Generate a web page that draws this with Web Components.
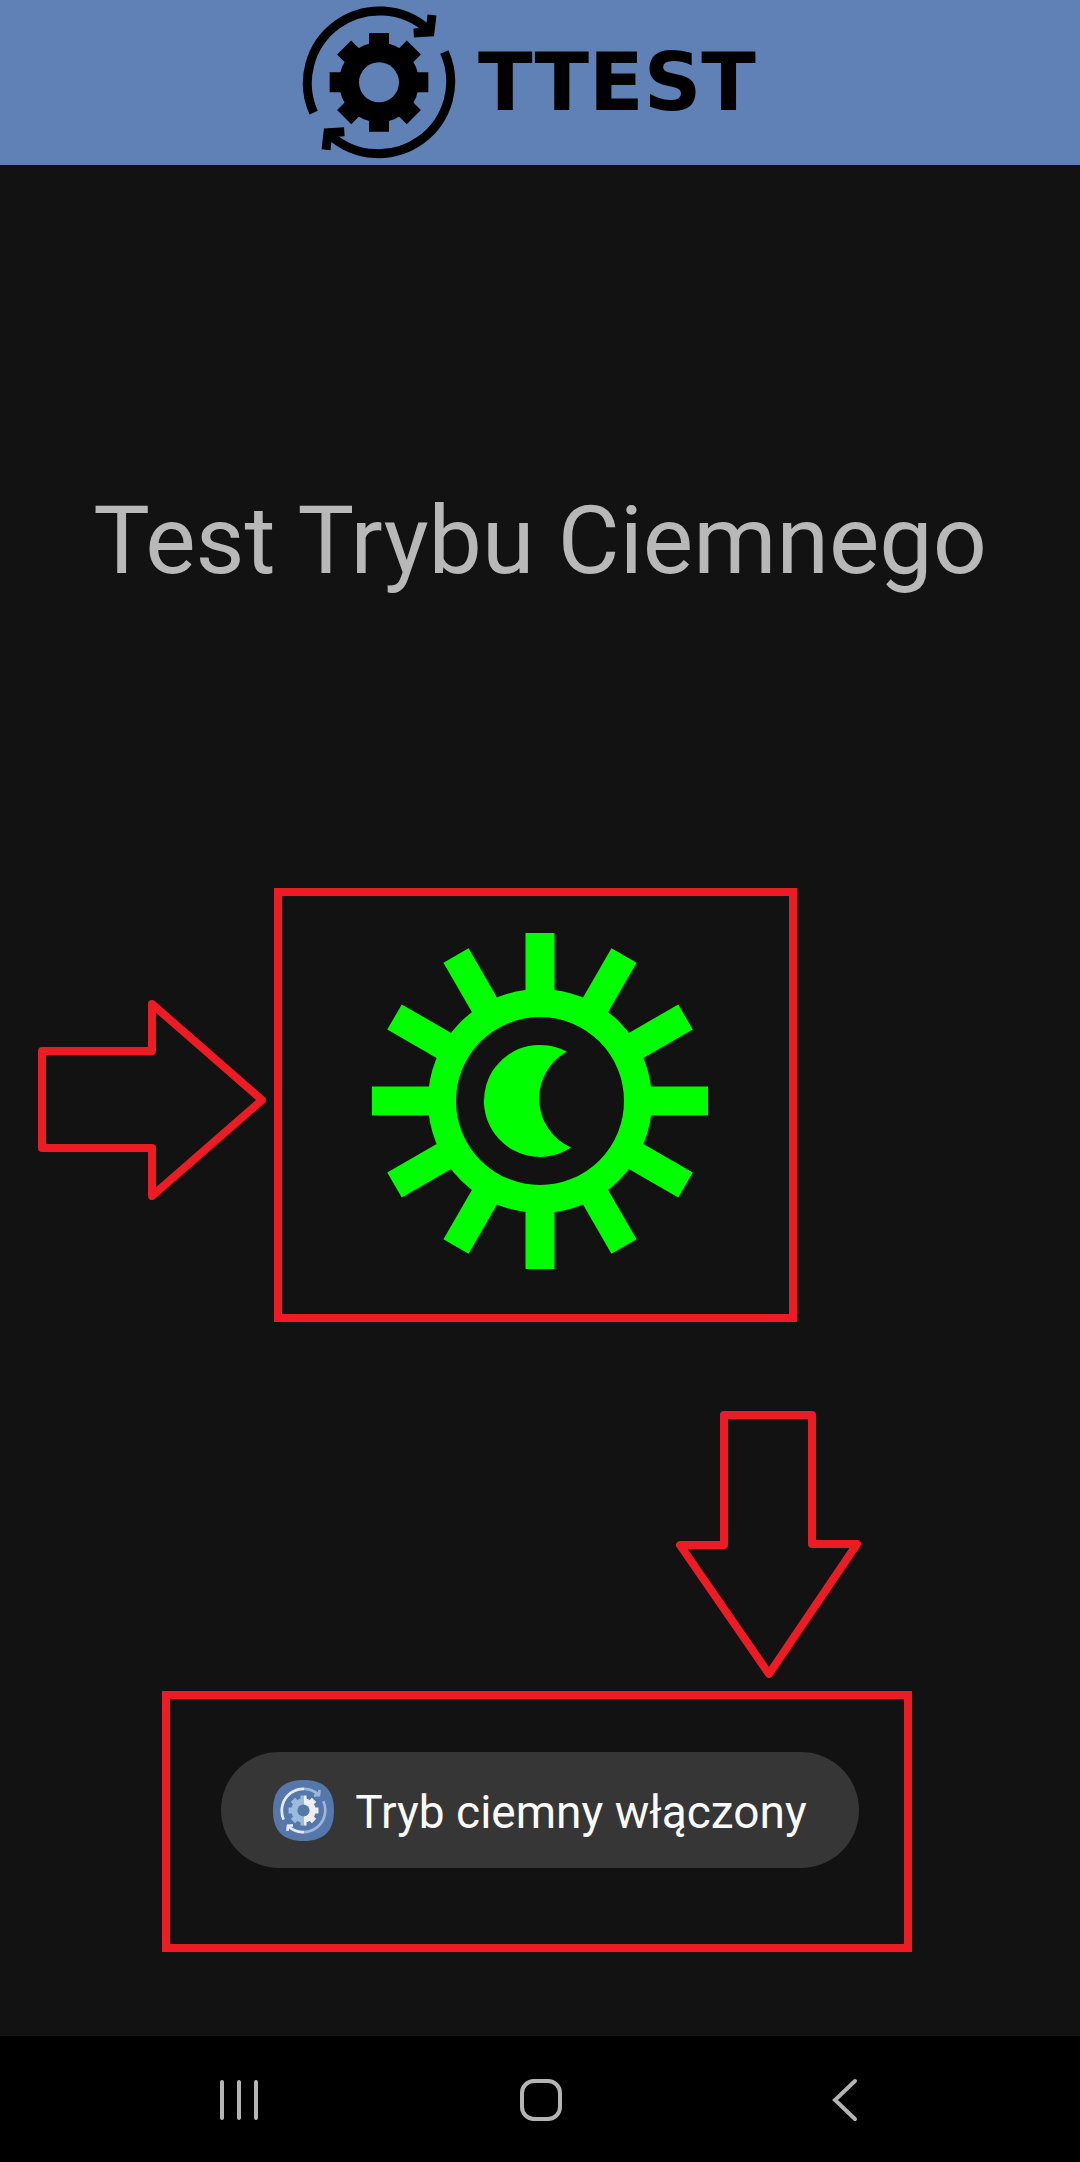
<!DOCTYPE html>
<html lang="pl">
<head>
<meta charset="utf-8">
<meta name="viewport" content="width=device-width, initial-scale=1">
<title>Test Trybu Ciemnego</title>
<style>
  body { margin: 0; background: #121212; color: #b8b8b8; font-family: Roboto, "Noto Sans", sans-serif; }
</style>
</head>
<body>
<dark-mode-app></dark-mode-app>
<script>
  const define = (name, markup, setup) => {
    const template = document.createElement('template');
    template.innerHTML = markup;
    customElements.define(name, class extends HTMLElement {
      constructor() {
        super();
        this.attachShadow({ mode: 'open' }).append(template.content.cloneNode(true));
      }
      connectedCallback() { if (setup) setup(this, this.shadowRoot); }
    });
  };

  // Cog inside two chasing arrows; left and right halves are coloured by custom properties.
  define('gear-mark', `
    <style>
      :host { display: block; width: 154px; height: 155px; --a: #000; --b: #000; --c: #000; --d: #000; }
      svg { display: block; width: 100%; height: 100%; }
      .ring-l { stop-color: var(--a); } .ring-r { stop-color: var(--b); }
      .cog-l { stop-color: var(--c); } .cog-r { stop-color: var(--d); }
    </style>
    <svg viewBox="35 14 462 465" aria-hidden="true">
      <defs>
        <linearGradient id="ring" gradientUnits="userSpaceOnUse" x1="36" x2="496" y1="0" y2="0">
          <stop class="ring-l" offset=".5"/><stop class="ring-r" offset=".5"/>
        </linearGradient>
        <linearGradient id="cog" gradientUnits="userSpaceOnUse" x1="36" x2="496" y1="0" y2="0">
          <stop class="cog-l" offset=".5"/><stop class="cog-r" offset=".5"/>
        </linearGradient>
        <mask id="cogmask" maskUnits="userSpaceOnUse" x="100" y="80" width="340" height="340">
          <g fill="#fff" stroke="#fff" stroke-width="60">
            <circle cx="266" cy="246" r="120" stroke="none"/>
            <path d="M266 98V394M118 246H414M161.500 141.500L370.500 350.500M370.500 141.500L161.500 350.500"/>
          </g>
          <circle cx="266" cy="246" r="60" fill="#000"/>
        </mask>
      </defs>
      <g fill="none" stroke="url(#ring)" stroke-width="27">
        <path d="M70 337A216.500 216.500 0 0 1 413 88"/>
        <path d="M425 44L419 95L370 98"/>
        <path d="M462 155A216.500 216.500 0 0 1 119 404"/>
        <path d="M107 448L113 397L162 394"/>
      </g>
      <rect x="100" y="80" width="340" height="340" fill="url(#cog)" mask="url(#cogmask)"/>
    </svg>`);

  define('brand-bar', `
    <style>
      :host { display: flex; justify-content: center; align-items: center; height: 165px; background: #6081b6; color: #000; }
      .word { width: 323px; text-align: center; font: bold 80px/100px "DejaVu Sans", sans-serif; }
    </style>
    <gear-mark></gear-mark>
    <span class="word"><slot></slot></span>`);

  define('mode-toggle', `
    <style>
      :host { display: block; }
      button { display: block; padding: 0; border: 0; background: none; color: #0f0; cursor: pointer; }
      svg { display: block; width: 336px; height: 336px; }
    </style>
    <button type="button" aria-label="Tryb ciemny" aria-pressed="true">
      <svg viewBox="-168 -168 336 336" aria-hidden="true">
        <circle r="98" fill="none" stroke="currentColor" stroke-width="28"/>
        <g id="rays" stroke="currentColor" stroke-width="29"></g>
        <path fill="currentColor" d="M26.700 -49.300A56 56 0 1 0 31 46.500A53.600 53.600 0 0 1 26.700 -49.300Z"/>
      </svg>
    </button>`, (host, root) => {
      const rays = root.getElementById('rays');
      if (rays.childElementCount) return;
      for (let angle = 0; angle < 360; angle += 30) {
        const ray = document.createElementNS('http://www.w3.org/2000/svg', 'path');
        ray.setAttribute('d', 'M0 -106V-168');
        ray.setAttribute('transform', `rotate(${angle})`);
        rays.append(ray);
      }
    });

  define('callout-frame', `
    <style>:host { display: block; box-sizing: border-box; border: 8px solid #ed1c24; }</style>
    <slot></slot>`);

  define('callout-arrow', `
    <style>
      :host { display: block; }
      svg { display: none; fill: none; stroke: #ed1c24; stroke-width: 8; stroke-linejoin: round; }
      :host([direction="right"]) .right, :host([direction="down"]) .down { display: block; }
    </style>
    <svg class="right" width="228" height="200" viewBox="0 0 228 200" aria-hidden="true">
      <path d="M4 51H114V4L224 100L114 196V148H4Z"/>
    </svg>
    <svg class="down" width="185" height="267" viewBox="0 0 185 267" aria-hidden="true">
      <path d="M48 4H136V133H181L93 263L4 134H48Z"/>
    </svg>`);

  define('toast-message', `
    <style>
      :host { display: flex; align-items: center; justify-content: center; gap: 21px; box-sizing: border-box;
        width: 638px; height: 116px; border-radius: 58px; background: #363636; color: #fafafa;
        font-size: 46px; line-height: 54px; white-space: nowrap; }
      .app { display: grid; place-items: center; flex: none; width: 61px; height: 61px; }
      .app > * { grid-area: 1 / 1; }
      .app svg { width: 61px; height: 61px; }
      gear-mark { width: 47px; height: 47px; --a: #e3eaf4; --b: #9bb8dc; --c: #9bbbdd; --d: #eceef0; }
      p { margin: 0; padding-top: 4px; }
    </style>
    <span class="app">
      <svg viewBox="0 0 61 61" aria-hidden="true">
        <path fill="#5677a9" d="M30.500 0C51 0 61 10 61 30.500S51 61 30.500 61S0 51 0 30.500S10 0 30.500 0Z"/>
      </svg>
      <gear-mark></gear-mark>
    </span>
    <p><slot></slot></p>`);

  define('system-nav', `
    <style>
      :host { display: block; background: #000; }
      nav { display: grid; grid-template-columns: repeat(3, 1fr); padding: 2px 85px 0 88px; }
      button { display: grid; place-items: center; height: 124px; padding: 0; border: 0; background: none; color: #b4b4b4; cursor: pointer; }
      svg { display: block; width: 44px; height: 44px; fill: none; stroke: currentColor; stroke-width: 4; stroke-linecap: round; }
    </style>
    <nav aria-label="Nawigacja">
      <button type="button" aria-label="Ostatnie"><svg viewBox="0 0 44 44"><path d="M5 4V40M22 4V40M39 4V40"/></svg></button>
      <button type="button" aria-label="Ekran główny"><svg viewBox="0 0 44 44"><rect x="3" y="3" width="38" height="38" rx="12"/></svg></button>
      <button type="button" aria-label="Wstecz"><svg viewBox="0 0 44 44"><path d="M33 3L13 22L33 41"/></svg></button>
    </nav>`);

  define('dark-mode-app', `
    <style>
      :host { display: flex; flex-direction: column; min-height: 100vh; }
      main { flex: 1; display: flex; flex-direction: column; padding: 320px 0 84px; }
      h1 { margin: 0 0 291px; text-align: center; font-size: 95px; line-height: 112px; font-weight: 400; }
      .toggle { display: grid; grid-template-columns: 1fr auto 1fr; align-items: center; padding-right: 9px; margin-bottom: 89px; }
      .toggle callout-arrow { justify-self: end; margin: 0 8px 10px 0; }
      .toggle callout-frame { padding: 37px 81px 45px 90px; }
      .result { display: flex; flex-direction: column; align-self: center; gap: 13px; width: 750px; max-width: 100%; padding-right: 6px; }
      .result callout-arrow { align-self: flex-end; margin-right: 51px; }
      .result callout-frame { display: flex; justify-content: center; padding: 53px 0 76px 6px; }
    </style>
    <brand-bar>TTEST</brand-bar>
    <main>
      <h1>Test Trybu Ciemnego</h1>
      <section class="toggle">
        <callout-arrow direction="right"></callout-arrow>
        <callout-frame><mode-toggle></mode-toggle></callout-frame>
      </section>
      <section class="result">
        <callout-arrow direction="down"></callout-arrow>
        <callout-frame><toast-message role="status">Tryb ciemny włączony</toast-message></callout-frame>
      </section>
    </main>
    <system-nav></system-nav>`);
</script>
</body>
</html>
